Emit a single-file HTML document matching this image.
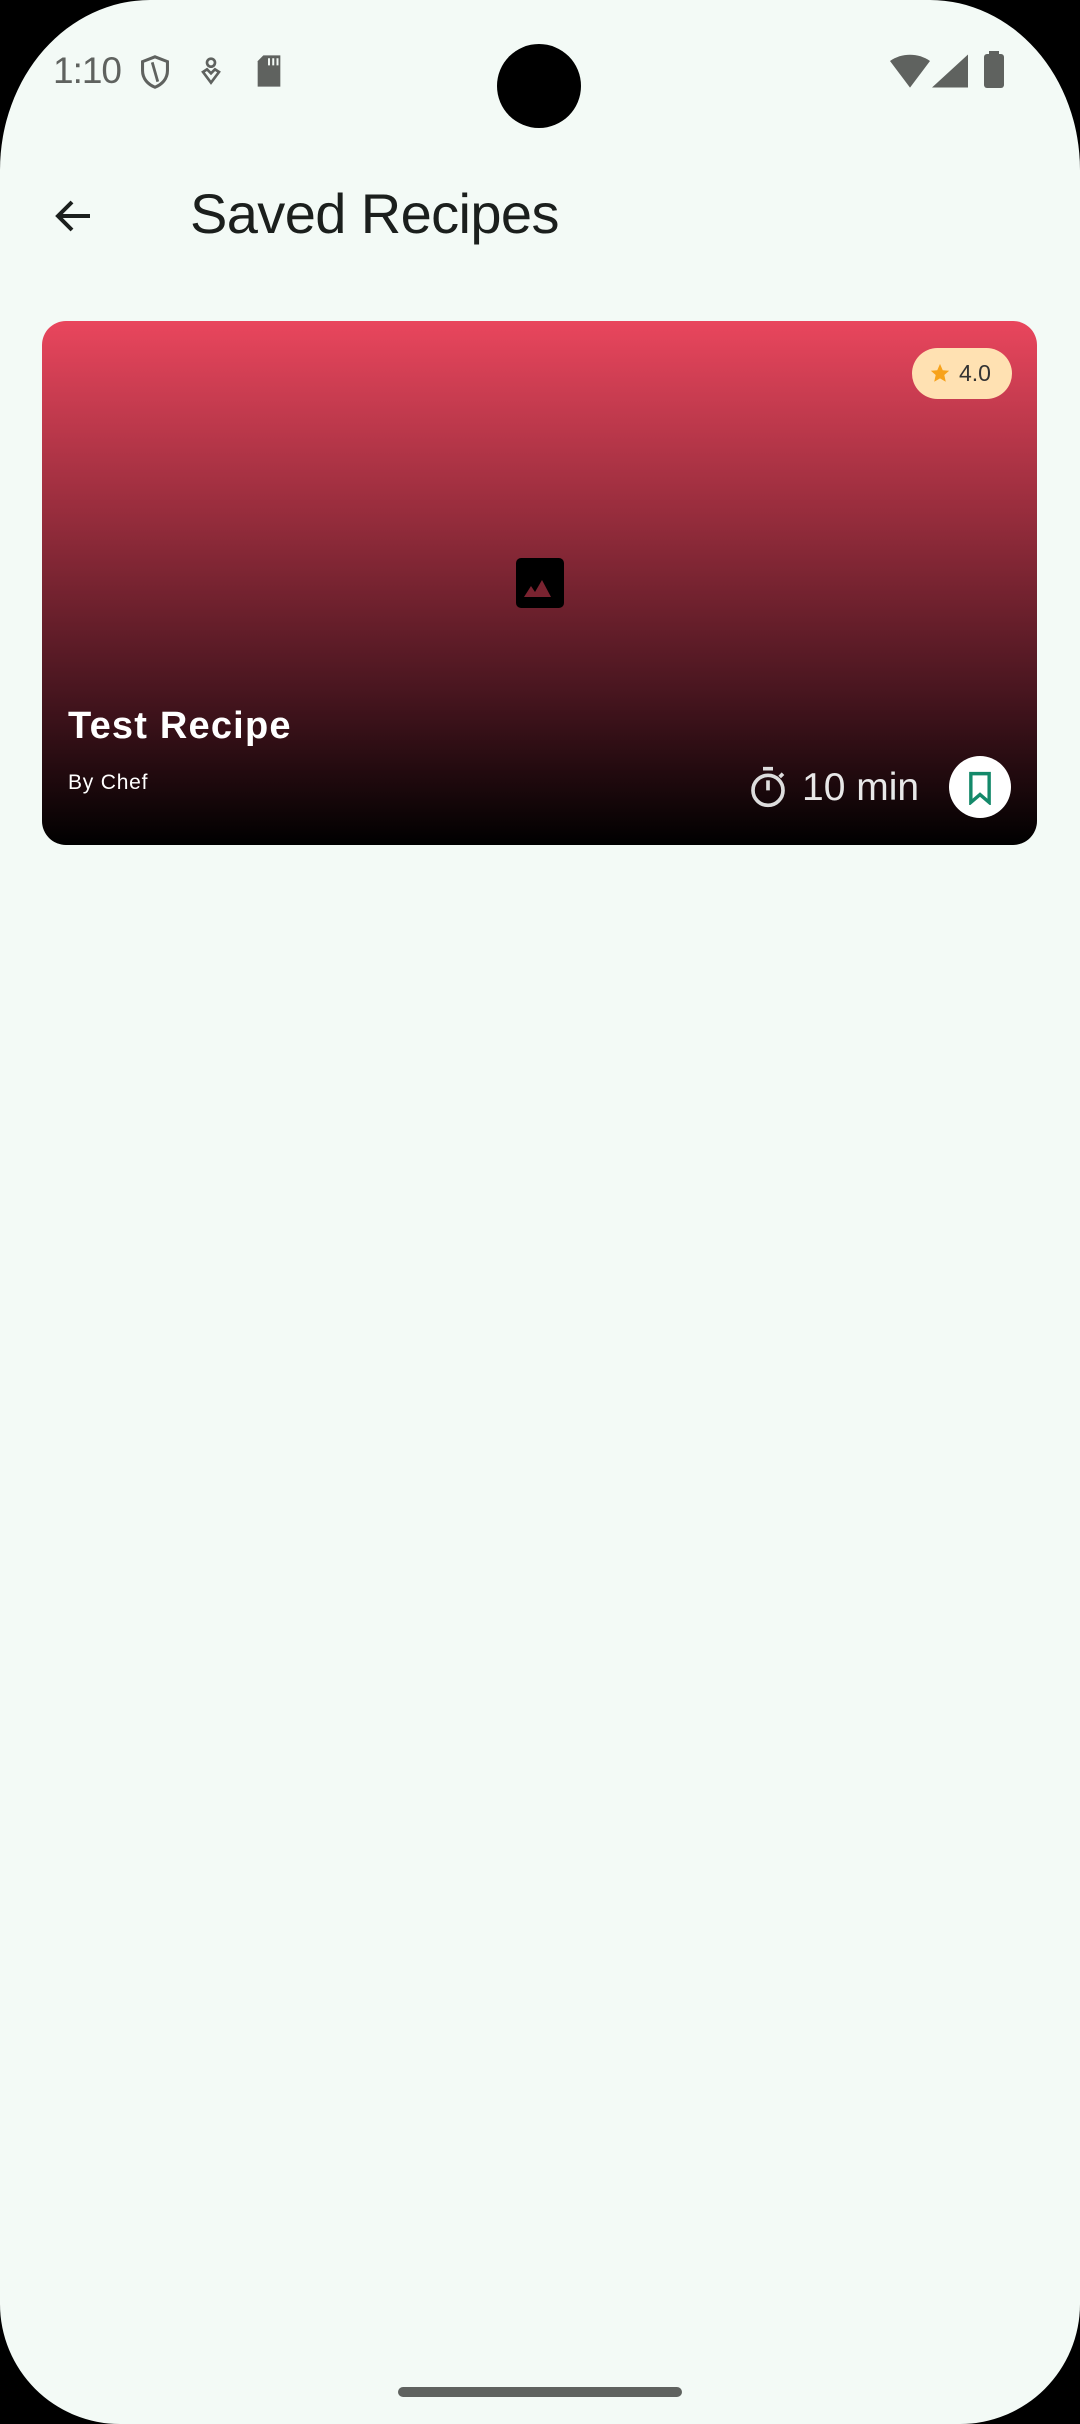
<!DOCTYPE html>
<html><head><meta charset="utf-8"><style>
*{margin:0;padding:0;box-sizing:border-box}
html,body{width:1080px;height:2424px;background:#000;overflow:hidden;font-family:"Liberation Sans",sans-serif}
.screen{position:absolute;left:0;top:0;width:1080px;height:2424px;background:#f3faf6;border-radius:150px 150px 120px 120px/170px 170px 120px 120px}
.abs{position:absolute}
</style></head><body>
<div class="screen">
  <div class="abs" style="left:53px;top:50px;font-size:37px;color:#5f625f;letter-spacing:-1px">1:10</div>
  <svg class="abs" style="left:138px;top:54px" width="34" height="36" viewBox="0 0 24 26"><path d="M12 2 L21 5.5 V12 C21 18 17 22 12 24 C7 22 3 18 3 12 V5.5 Z" fill="none" stroke="#5f625f" stroke-width="2.2"/><path d="M10 6 L14 20" stroke="#5f625f" stroke-width="2"/></svg>
  <svg class="abs" style="left:197px;top:56px" width="28" height="32" viewBox="0 0 20 24"><circle cx="10" cy="5" r="3" fill="none" stroke="#5f625f" stroke-width="2"/><path d="M4 12 L10 20 L16 12 L13 10 L10 13 L7 10 Z" fill="none" stroke="#5f625f" stroke-width="2"/></svg>
  <svg class="abs" style="left:254px;top:54px" width="30" height="34" viewBox="0 0 20 24"><path d="M6 1 H18 V23 H2 V5 Z" fill="#5f625f"/><path d="M10 3v5M13 3v5M16 3v5" stroke="#f3faf6" stroke-width="1.4"/></svg>
  <div class="abs" style="left:497px;top:44px;width:84px;height:84px;border-radius:50%;background:#000"></div>
  <svg class="abs" style="left:890px;top:54px" width="40" height="34" viewBox="0 0 24 20"><path d="M0 4 C7 -1 17 -1 24 4 L12 20 Z" fill="#5f625f"/></svg>
  <svg class="abs" style="left:932px;top:54px" width="36" height="34" viewBox="0 0 24 22"><path d="M24 0 V22 H0 Z" fill="#5f625f"/></svg>
  <div class="abs" style="left:984px;top:54px;width:20px;height:34px;background:#5f625f;border-radius:3px"></div>
  <div class="abs" style="left:989px;top:51px;width:10px;height:5px;background:#5f625f"></div>

  <svg class="abs" style="left:50px;top:192px" width="48" height="48" viewBox="0 0 24 24"><path d="M20 12H5M11 5L4 12L11 19" fill="none" stroke="#1b1f1d" stroke-width="2"/></svg>
  <div class="abs" style="left:190px;top:181px;font-size:56px;color:#1b1f1d;letter-spacing:-0.6px">Saved Recipes</div>

  <div class="abs" style="left:42px;top:321px;width:995px;height:524px;border-radius:24px;background:linear-gradient(#e9465d,#9b2e3e 35%,#4a1620 70%,#000)"></div>
  <div class="abs" style="left:912px;top:348px;width:100px;height:51px;border-radius:26px;background:#ffe1b2"></div>
  <svg class="abs" style="left:929px;top:362px" width="22" height="22" viewBox="0 0 24 24"><path d="M12 2l3 7 7 .6-5.3 4.6 1.6 7.3L12 17.8 5.7 21.5l1.6-7.3L2 9.6 9 9z" fill="#f7a21b"/></svg>
  <div class="abs" style="left:959px;top:360px;font-size:23px;color:#333">4.0</div>
  <div class="abs" style="left:516px;top:558px;width:48px;height:50px;border-radius:5px;background:#000"></div>
  <svg class="abs" style="left:521px;top:570px" width="38" height="30" viewBox="0 0 38 30"><path d="M3 27 L10 16 L14 22 L21 10 L30 27 Z" fill="#7a2330"/></svg>
  <div class="abs" style="left:68px;top:705px;font-size:38px;font-weight:bold;color:#fff;letter-spacing:1.2px">Test Recipe</div>
  <div class="abs" style="left:68px;top:771px;font-size:21px;color:#fff;letter-spacing:0.8px">By Chef</div>
  <svg class="abs" style="left:748px;top:765px" width="40" height="44" viewBox="0 0 24 26"><circle cx="12" cy="15" r="9" fill="none" stroke="#ddd" stroke-width="2.2"/><path d="M9 2h6M12 15V9M19 7l2-2" stroke="#ddd" stroke-width="2.2"/></svg>
  <div class="abs" style="left:802px;top:766px;font-size:39px;color:#e8e8e8">10 min</div>
  <div class="abs" style="left:949px;top:756px;width:62px;height:62px;border-radius:50%;background:#fff"></div>
  <svg class="abs" style="left:964px;top:771px" width="32" height="34" viewBox="0 0 24 26"><path d="M5 2H19V24L12 18L5 24Z" fill="none" stroke="#14896a" stroke-width="2.6"/></svg>

  <div class="abs" style="left:398px;top:2387px;width:284px;height:10px;border-radius:5px;background:#5f625f"></div>
</div>
</body></html>
